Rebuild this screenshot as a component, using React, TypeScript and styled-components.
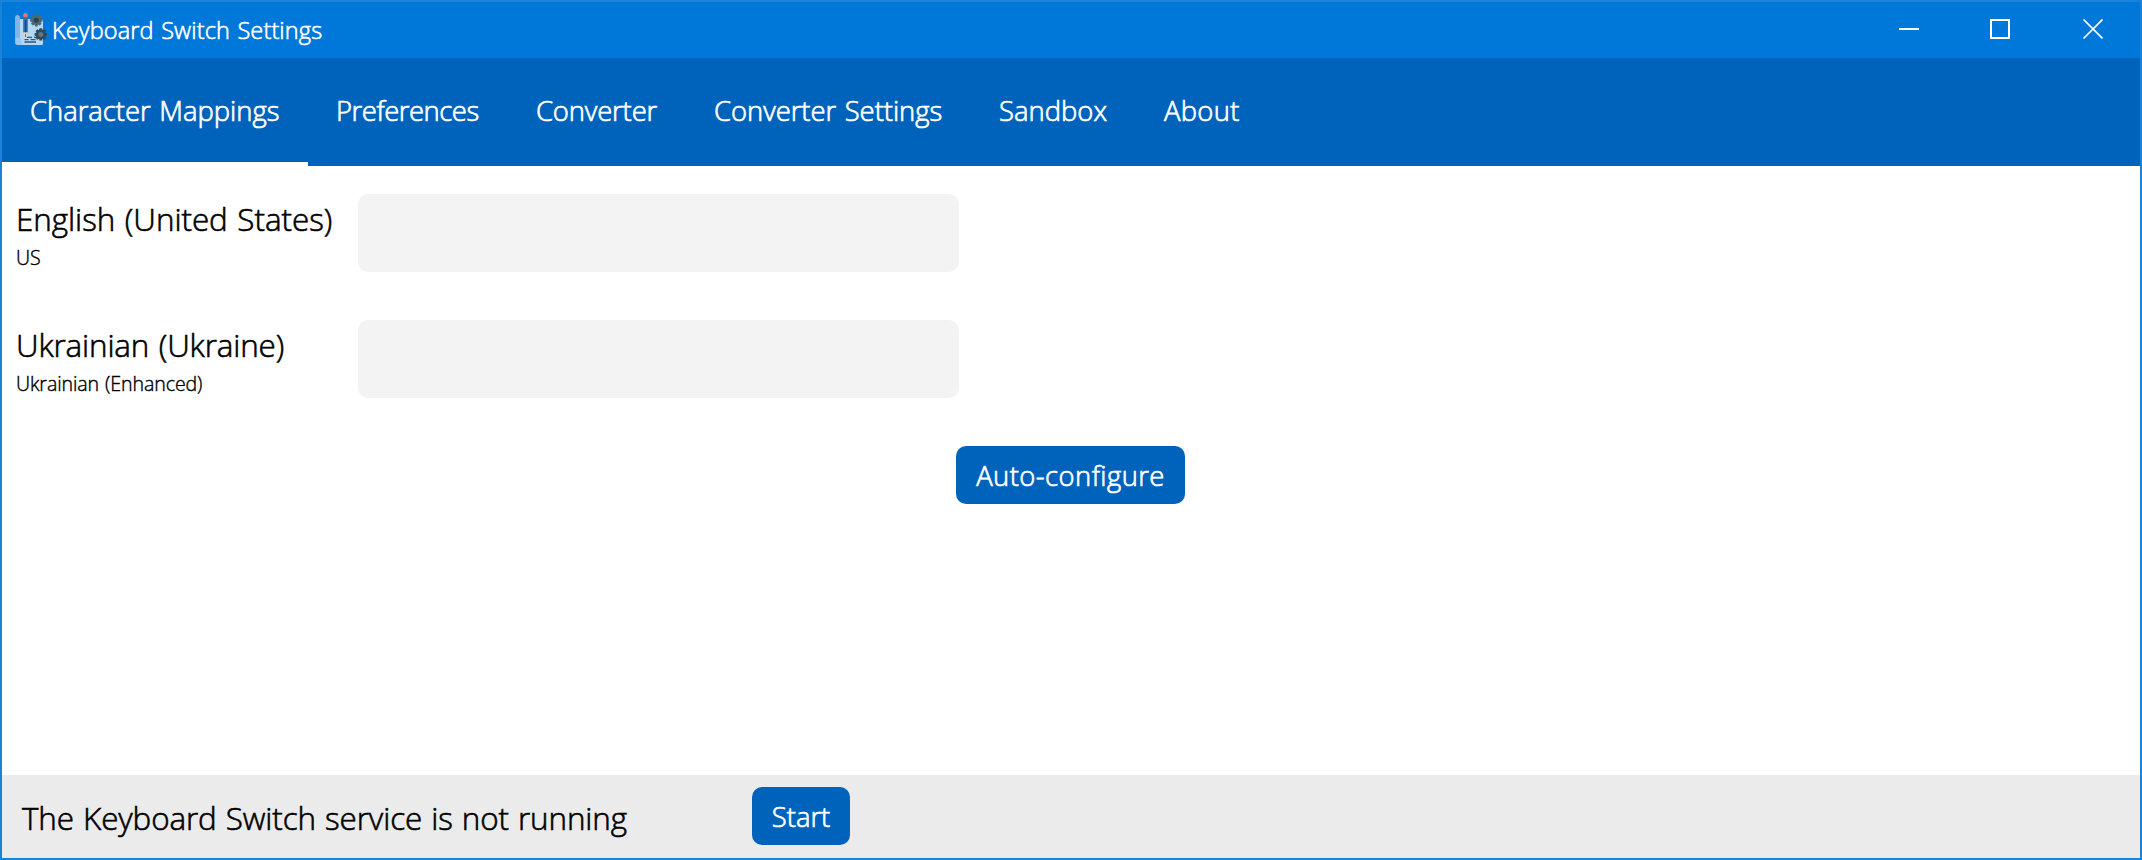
import React from "react";
import styled, { createGlobalStyle } from "styled-components";

const GlobalStyle = createGlobalStyle`
  *, *::before, *::after { box-sizing: border-box; }
  body {
    margin: 0;
    background: #ffffff;
    color: #000000;
    font-family: "Open Sans", "Noto Sans", sans-serif;
    font-weight: 300;
    -webkit-text-stroke-width: 0.6px;
  }
`;

const Window = styled.div`
  display: flex;
  flex-direction: column;
  width: 100%;
  height: 100vh;
  border: 2px solid #1883d9;
  background: #ffffff;
`;

const TitleBar = styled.header`
  display: flex;
  align-items: center;
  height: 56px;
  padding-left: 12px;
  background: #0078d9;
  color: #ffffff;
`;

const Title = styled.h1`
  flex: 1;
  margin: 0 0 0 4px;
  font-size: 23.5px;
  font-weight: inherit;
  letter-spacing: 0.13px;
  word-spacing: 1.2px;
  line-height: 56px;
`;

const WindowButton = styled.button<{ $width: number }>`
  display: flex;
  align-items: center;
  justify-content: center;
  width: ${(p) => p.$width}px;
  height: 56px;
  padding: 0;
  border: 0;
  background: transparent;
  color: #ffffff;
`;

const Tabs = styled.nav`
  display: flex;
  height: 108px;
  background: #0063bb;
`;

const Tab = styled.button<{ $width: number; $tracking: number; $active?: boolean }>`
  width: ${(p) => p.$width}px;
  height: 108px;
  padding: 1px 0 0 28px;
  border: 0;
  border-bottom: 4px solid ${(p) => (p.$active ? "#ffffff" : "transparent")};
  background: transparent;
  color: #ffffff;
  font: inherit;
  font-size: 27.4px;
  letter-spacing: ${(p) => p.$tracking}px;
  word-spacing: 1.5px;
  line-height: 103px;
  text-align: left;
  white-space: nowrap;
  -webkit-text-stroke-width: 0.7px;
`;

const Content = styled.main`
  display: flex;
  flex: 1;
  flex-direction: column;
  gap: 48px;
  padding-top: 28px;
`;

const LayoutRow = styled.div`
  display: grid;
  grid-template-columns: 342px 601px;
  height: 78px;
  padding-left: 14px;
`;

const LayoutLabel = styled.div`
  padding-top: 4px;
  white-space: nowrap;
`;

const LanguageName = styled.div<{ $tracking: number }>`
  font-size: 31.4px;
  letter-spacing: ${(p) => p.$tracking}px;
  word-spacing: 1.5px;
  line-height: 41px;
`;

const KeyboardName = styled.div`
  margin-top: 5px;
  font-size: 19.6px;
  letter-spacing: -0.1px;
  word-spacing: 1px;
  line-height: 27px;
  -webkit-text-stroke-width: 0.4px;
`;

const CharacterInput = styled.input`
  width: 601px;
  height: 78px;
  padding: 0 16px;
  border: 0;
  border-radius: 10px;
  background: #f3f3f3;
  font: inherit;
  font-size: 28px;
`;

const ActionButton = styled.button<{ $width: number; $tracking: number }>`
  width: ${(p) => p.$width}px;
  height: 58px;
  padding: 0;
  border: 0;
  border-radius: 10px;
  background: #0063bb;
  color: #ffffff;
  font: inherit;
  font-size: 27.4px;
  letter-spacing: ${(p) => p.$tracking}px;
  line-height: 59px;
  white-space: nowrap;
  -webkit-text-stroke-width: 0.7px;
`;

const Actions = styled.div`
  display: flex;
  justify-content: center;
  padding-right: 1px;
`;

const StatusBar = styled.footer`
  display: grid;
  grid-template-columns: 730px auto;
  align-items: center;
  justify-content: start;
  height: 83px;
  padding: 0 0 1px 20px;
  background: #ebebeb;
`;

const StatusText = styled.span`
  padding-top: 3px;
  font-size: 31.4px;
  letter-spacing: -0.1px;
  word-spacing: 1px;
  line-height: 43px;
  white-space: nowrap;
`;

const tabs = [
  { label: "Character Mappings", width: 306, tracking: 0, active: true },
  { label: "Preferences", width: 200, tracking: -0.45 },
  { label: "Converter", width: 178, tracking: -0.15 },
  { label: "Converter Settings", width: 285, tracking: -0.03 },
  { label: "Sandbox", width: 165, tracking: 0.02 },
  { label: "About", width: 134, tracking: 0.3 },
];

const layouts = [
  { language: "English (United States)", keyboard: "US", tracking: -0.04 },
  { language: "Ukrainian (Ukraine)", keyboard: "Ukrainian (Enhanced)", tracking: -0.14 },
];

function Gear({ x, y, body, hub }: { x: number; y: number; body: string; hub: string }) {
  return (
    <g transform={`translate(${x} ${y})`}>
      {[0, 45, 90, 135].map((a) => (
        <rect key={a} x="-1.5" y="-6.2" width="3" height="12.4" rx="0.6" fill={body} transform={`rotate(${a})`} />
      ))}
      <circle r="4.9" fill={body} />
      <circle r="2.5" fill={hub} />
    </g>
  );
}

function AppIcon() {
  return (
    <svg width="34" height="34" viewBox="0 1 34 34">
      <path d="M5 7H27.5Q29 7 29 8.5V31.5Q29 33 27.5 33H4Z" fill="#b4d8f4" />
      <path d="M1 5.5Q1 3 3.2 3Q6 3 6 5.5V26Q1 27 1 31Z" fill="#84b4e6" />
      <path d="M1 30Q1 25.5 4 25.5Q7.5 25.5 7.5 29.5V33H3.5Q1 33 1 30Z" fill="#9cc8f0" />
      <rect x="9.2" y="1" width="4.6" height="5" rx="2" fill="#f4706c" />
      <rect x="9.2" y="5" width="4.6" height="2" fill="#4a6a9c" />
      <rect x="9.2" y="6.5" width="4.6" height="14" fill="#2e6cb4" />
      <rect x="10.9" y="8" width="1.4" height="12.5" fill="#1d4a86" />
      <path d="M9.2 20.5H13.8L12.3 24.5H10.7Z" fill="#ecd2be" />
      <path d="M11.5 25V22" stroke="#7b6a66" strokeWidth="1" />
      <path d="M13 25.3H18M20 25.3H22M10.5 27.7H14.5M16.5 27.7H21.5M10.5 30H22" stroke="#36566e" strokeWidth="1.3" fill="none" />
      <Gear x={22.3} y={8.2} body="#4a6a72" hub="#26425a" />
      <Gear x={26.8} y={22.4} body="#30495c" hub="#5a7880" />
    </svg>
  );
}

export default function App() {
  return (
    <Window>
      <GlobalStyle />
      <TitleBar>
        <AppIcon />
        <Title>Keyboard Switch Settings</Title>
        <WindowButton $width={92} aria-label="Minimize">
          <svg width="20" height="20" viewBox="0 0 20 20">
            <path d="M0 9H20" stroke="currentColor" strokeWidth="2" />
          </svg>
        </WindowButton>
        <WindowButton $width={90} aria-label="Maximize">
          <svg width="20" height="22" viewBox="0 0 20 22">
            <rect x="1" y="1" width="18" height="18" fill="none" stroke="currentColor" strokeWidth="2" />
          </svg>
        </WindowButton>
        <WindowButton $width={95} aria-label="Close">
          <svg width="21" height="22" viewBox="-1 0 21 22">
            <path d="M0.5 0.5L19.5 19.5M19.5 0.5L0.5 19.5" stroke="currentColor" strokeWidth="1.7" />
          </svg>
        </WindowButton>
      </TitleBar>
      <Tabs>
        {tabs.map((t) => (
          <Tab key={t.label} $width={t.width} $tracking={t.tracking} $active={t.active}>
            {t.label}
          </Tab>
        ))}
      </Tabs>
      <Content>
        {layouts.map((l) => (
          <LayoutRow key={l.language}>
            <LayoutLabel>
              <LanguageName $tracking={l.tracking}>{l.language}</LanguageName>
              <KeyboardName>{l.keyboard}</KeyboardName>
            </LayoutLabel>
            <CharacterInput aria-label={l.language} />
          </LayoutRow>
        ))}
        <Actions>
          <ActionButton $width={229} $tracking={0.45}>Auto-configure</ActionButton>
        </Actions>
      </Content>
      <StatusBar>
        <StatusText>The Keyboard Switch service is not running</StatusText>
        <ActionButton $width={98} $tracking={0}>Start</ActionButton>
      </StatusBar>
    </Window>
  );
}
